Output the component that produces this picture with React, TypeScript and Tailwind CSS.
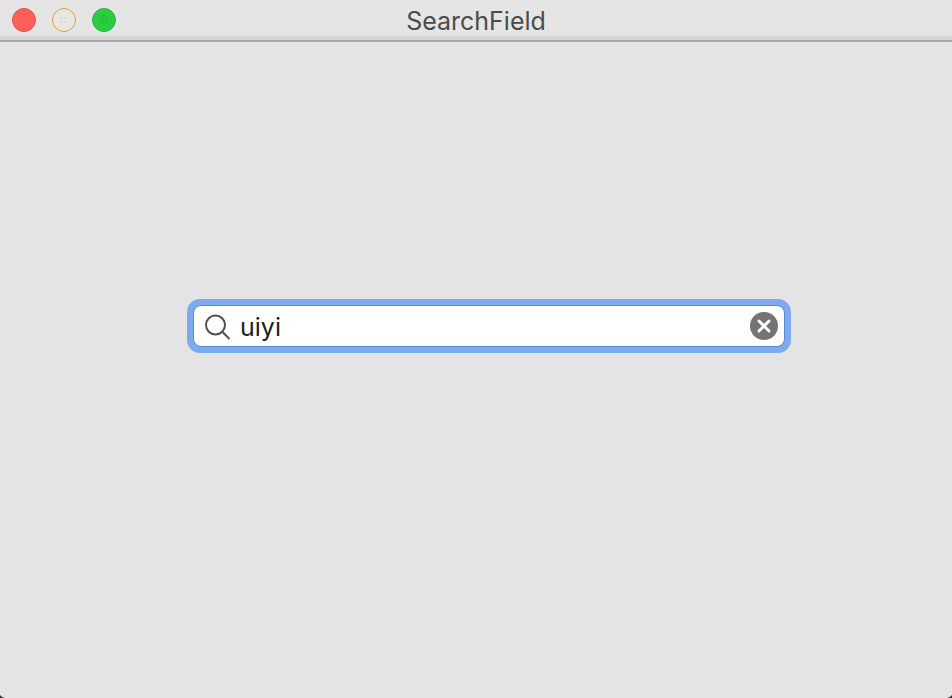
import { useState } from "react";

function TitleBar() {
  return (
    <header className="grid h-[42px] grid-cols-[1fr_auto_1fr] border-b-2 border-[#a9a9a9] bg-[#e5e5e5] bg-[conic-gradient(#c6c6c6_25%,#e5e5e5_0_50%,#c6c6c6_0_75%,#e5e5e5_0)] bg-[length:2px_2px]">
      <div className="mb-1 flex items-center gap-4 bg-[#e5e5e5] pt-1 pl-3">
        <button aria-label="Close" className="size-6 rounded-full border border-[#e0524c] bg-[#ff5f57]" />
        <button aria-label="Minimize" className="flex size-6 items-center justify-center rounded-full border border-[#dfa032] bg-[#e8e6e4]">
          <svg width="6" height="6" viewBox="0 0 6 6" fill="#e3b45c" aria-hidden="true">
            <path d="M0 0h1v1H0zM4 0h1v1H4zM0 4h1v1H0zM4 4h1v1H4z" />
          </svg>
        </button>
        <button aria-label="Zoom" className="flex size-6 items-center justify-center rounded-full border border-[#27b53a] bg-[#2bcb42]">
          <svg width="10" height="10" viewBox="0 0 10 10" aria-hidden="true">
            <path d="M2 .5h6M0 2.5h10M0 4.5h10M0 6.5h10M2 8.5h6" stroke="#22a936" strokeDasharray="1 1" />
          </svg>
        </button>
      </div>
      <h1 className="mb-1 bg-[#e5e5e5] pt-1.5 text-[25px] leading-[30px] text-[#4b4b4b]">SearchField</h1>
      <div className="mb-1 bg-[#e5e5e5]" />
    </header>
  );
}

export default function App() {
  const [query, setQuery] = useState("uiyi");

  return (
    <div className="relative flex min-h-screen flex-col overflow-hidden bg-[#e4e4e4] font-['Inter','Liberation_Sans',sans-serif]">
      <TitleBar />
      <main className="flex flex-1 flex-col pt-[257px] pr-[161px] pl-[187px]">
        <div className="rounded-[13px] bg-[#7eabee] p-[6px]">
          <div className="flex h-[42px] items-center rounded-[8px] border border-[#5589d3] bg-white pr-[6px] pl-[10px]">
            <svg width="28" height="28" viewBox="0 0 28 28" fill="none" stroke="#505050" strokeWidth="2" aria-hidden="true">
              <circle cx="11.5" cy="13" r="9.5" />
              <path d="M18.3 19.8 25.5 27" />
            </svg>
            <input
              aria-label="Search"
              value={query}
              onChange={(event) => setQuery(event.target.value)}
              className="ml-2 h-full min-w-0 flex-1 bg-transparent pt-0.5 text-[25px] text-[#202020] outline-none"
            />
            <button aria-label="Clear" onClick={() => setQuery("")} className="size-7 rounded-full bg-[#747474]">
              <svg width="28" height="28" viewBox="0 0 28 28" fill="none" stroke="white" strokeWidth="3" strokeLinecap="round" aria-hidden="true">
                <path d="m9 9 10 10M19 9 9 19" />
              </svg>
            </button>
          </div>
        </div>
      </main>
      <svg className="absolute bottom-0 left-0" width="5" height="3" aria-hidden="true">
        <path d="M0 0Q1 2 5 3H0Z" fill="#333333" />
      </svg>
      <svg className="absolute right-0 bottom-0" width="5" height="3" aria-hidden="true">
        <path d="M5 0Q4 2 0 3H5Z" fill="#333333" />
      </svg>
    </div>
  );
}
